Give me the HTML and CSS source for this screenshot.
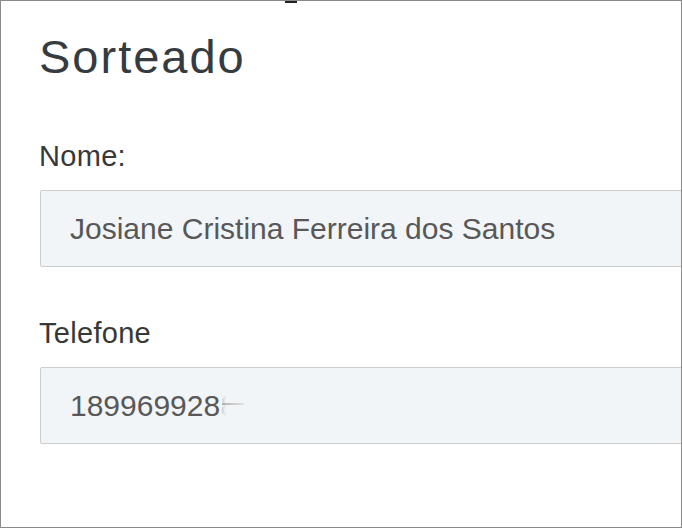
FILE: index.html
```html
<!DOCTYPE html>
<html>
<head>
  <meta charset="UTF-8">
  <meta name="viewport" content="width=device-width, initial-scale=1">
  <title>Sorteado</title>
  <link rel="stylesheet" href="styles.css">
</head>
<body>
  <div class="frame">
    <!-- bit of the element above that is cut off -->
    <span class="cut-mark"></span>
    <h2 class="title">Sorteado</h2>

    <div class="field">
      <label class="field-label">Nome:</label>
      <div class="field-value">Josiane Cristina Ferreira dos Santos</div>
    </div>

    <div class="field">
      <label class="field-label">Telefone</label>
      <div class="field-value">189969928<span class="hidden-digit">8</span><span class="hidden-dash"></span></div>
    </div>
  </div>
</body>
</html>
```

FILE: styles.css
```css
/* Base Styles */
body {
  margin: 0;
  font-family: "Liberation Sans", Arial, sans-serif;
  background: #fff;
}
.frame {
  position: relative;
  box-sizing: border-box;
  width: 682px;
  height: 528px;
  border: 1px solid #8a8a8a;
  padding: 29px 0 0 38px;
  overflow: hidden;
}
.cut-mark {
  position: absolute;
  top: 0;
  left: 284px;
  width: 12px;
  height: 2px;
  background: #222;
}
.title {
  margin: 0;
  font-size: 47px;
  line-height: 54px;
  font-weight: normal;
  letter-spacing: 2px;
  color: #363b40;
}
/* Form fields */
.field {
  margin-top: 56px;
}
.field + .field {
  margin-top: 50px;
}
.field-label {
  display: block;
  font-size: 29px;
  line-height: 33px;
  letter-spacing: 0.3px;
  color: #383838;
  margin-bottom: 17px;
}
.field-value {
  box-sizing: border-box;
  width: 700px;
  height: 77px;
  margin-left: 1px;
  padding-left: 29px;
  border: 1px solid #cdcdcd;
  border-radius: 2px;
  background: #f2f5f8;
  font-size: 30px;
  line-height: 75px;
  color: #585858;
  white-space: nowrap;
}
/* blurred end of the phone number */
.hidden-digit {
  color: transparent;
  background: linear-gradient(to right, #c4c4c4 0, rgba(242, 245, 248, 0) 7px);
  -webkit-background-clip: text;
  background-clip: text;
}
.hidden-dash {
  display: inline-block;
  width: 22px;
  height: 2px;
  margin-left: -15px;
  vertical-align: 11px;
  background: linear-gradient(to right, #b0b0b0, #e4e4e4);
}
```
